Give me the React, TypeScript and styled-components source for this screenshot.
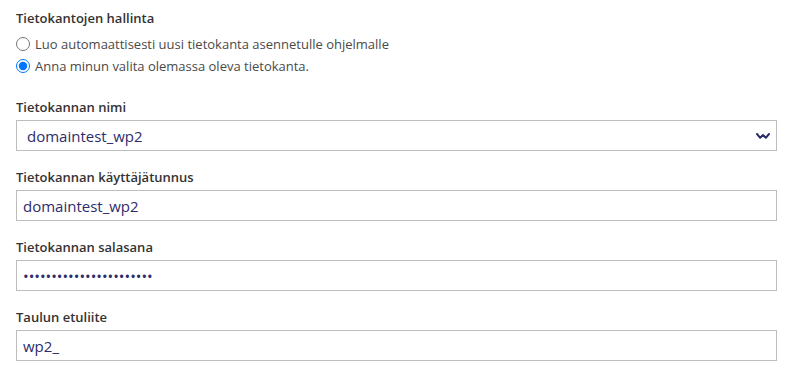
import { createGlobalStyle } from 'styled-components';
import styled from 'styled-components';

const GlobalStyle = createGlobalStyle`
  body {
    margin: 0;
    background: #fff;
    font-family: 'Open Sans', 'Noto Sans', sans-serif;
  }
`;

const Container = styled.div`
  display: flex;
  flex-direction: column;
  width: 761px;
  padding: 9px 0 0 16px;
`;

const Section = styled.div`
  display: flex;
  flex-direction: column;
  margin-bottom: 21px;
`;

const Title = styled.div`
  font-size: 13px;
  line-height: 18px;
  font-weight: 600;
  color: #333;
  margin-bottom: 6px;
`;

const RadioRow = styled.label`
  display: flex;
  align-items: center;
  gap: 5px;
  height: 22px;
  font-size: 13px;
  color: #4a4a4a;
`;

const Radio = styled.input`
  width: 14px;
  height: 14px;
  margin: 0;
  accent-color: #0075ff;
`;

const Field = styled.div`
  display: flex;
  flex-direction: column;
  margin-bottom: 17px;
`;

const Label = styled.div`
  font-size: 13px;
  line-height: 18px;
  font-weight: 600;
  color: #333;
  margin-bottom: 4px;
`;

const TextInput = styled.input`
  box-sizing: border-box;
  width: 100%;
  height: 31px;
  margin: 0;
  padding: 0 6px;
  border: 1px solid #bdbdbd;
  border-radius: 0;
  outline: none;
  font-family: 'Open Sans', 'Noto Sans', sans-serif;
  font-size: 15px;
  color: #2d2d6b;
`;

const SelectBox = styled.div`
  box-sizing: border-box;
  display: flex;
  align-items: center;
  justify-content: space-between;
  height: 31px;
  padding: 0 5px 0 10px;
  border: 1px solid #bdbdbd;
  font-size: 15px;
  color: #2d2d6b;
`;

const Chevron = () => (
  <svg width="16" height="8" viewBox="0 0 16 8">
    <polyline
      points="2,2 5.2,5.8 8,3 10.8,5.8 14,2"
      fill="none"
      stroke="#2d2d6b"
      strokeWidth="2"
      strokeLinejoin="round"
      strokeLinecap="round"
    />
  </svg>
);

const App = () => {
  return (
    <>
      <GlobalStyle />
      <Container>
        <Section>
          <Title>Tietokantojen hallinta</Title>
          <RadioRow>
            <Radio type="radio" name="db" />
            Luo automaattisesti uusi tietokanta asennetulle ohjelmalle
          </RadioRow>
          <RadioRow>
            <Radio type="radio" name="db" defaultChecked />
            Anna minun valita olemassa oleva tietokanta.
          </RadioRow>
        </Section>
        <Field>
          <Label>Tietokannan nimi</Label>
          <SelectBox>
            <span>domaintest_wp2</span>
            <Chevron />
          </SelectBox>
        </Field>
        <Field>
          <Label>Tietokannan käyttäjätunnus</Label>
          <TextInput type="text" defaultValue="domaintest_wp2" />
        </Field>
        <Field>
          <Label>Tietokannan salasana</Label>
          <TextInput type="password" defaultValue="domaintest_wp2_pass1234" />
        </Field>
        <Field>
          <Label>Taulun etuliite</Label>
          <TextInput type="text" defaultValue="wp2_" />
        </Field>
      </Container>
    </>
  );
};

export default App;
